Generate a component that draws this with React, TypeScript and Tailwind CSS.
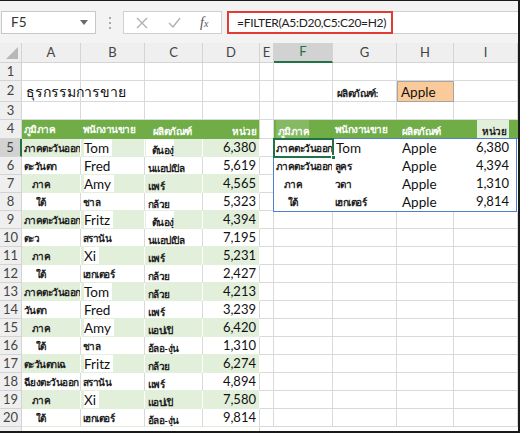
import React from 'react';

const font = { fontFamily: 'Lato, "Noto Sans", "DejaVu Sans", sans-serif' };

const colW = [
    'w-[22px]', 'w-[59px]', 'w-[64px]', 'w-[58px]', 'w-[57px]',
    'w-[14px]', 'w-[59px]', 'w-[64px]', 'w-[57px]', 'w-[64px]',
];
const letters = ['A', 'B', 'C', 'D', 'E', 'F', 'G', 'H', 'I'];

interface SaleRow {
    region: string;
    rep: string;
    product: string;
    units: string;
    indent?: 'sm' | 'lg';
}

const sales: SaleRow[] = [
    { region: 'ภาคตะวันออก', rep: 'Tom', product: 'ต้นองุ่', units: '6,380' },
    { region: 'ตะวันตก', rep: 'Fred', product: 'นแอปเปิล', units: '5,619' },
    { region: 'ภาค', rep: 'Amy', product: 'แพร์', units: '4,565', indent: 'sm' },
    { region: 'ใต้', rep: 'ชาล', product: 'กล้วย', units: '5,323', indent: 'lg' },
    { region: 'ภาคตะวันออก', rep: 'Fritz', product: 'ต้นองุ่', units: '4,394' },
    { region: 'ตะว', rep: 'สรานัน', product: 'นแอปเปิล', units: '7,195' },
    { region: 'ภาค', rep: 'Xi', product: 'แพร์', units: '5,231', indent: 'sm' },
    { region: 'ใต้', rep: 'เฮกเตอร์', product: 'กล้วย', units: '2,427', indent: 'lg' },
    { region: 'ภาคตะวันออก', rep: 'Tom', product: 'กล้วย', units: '4,213' },
    { region: 'วันตก', rep: 'Fred', product: 'แพร์', units: '3,239' },
    { region: 'ภาค', rep: 'Amy', product: 'แอปเปิ', units: '6,420', indent: 'sm' },
    { region: 'ใต้', rep: 'ชาล', product: 'อ้ลอ-งุ่น', units: '1,310', indent: 'lg' },
    { region: 'ตะวันตกเฉ', rep: 'Fritz', product: 'กล้วย', units: '6,274' },
    { region: 'ฉียงตะวันออก', rep: 'สรานัน', product: 'แพร์', units: '4,894' },
    { region: 'ภาค', rep: 'Xi', product: 'แอปเปิ', units: '7,580', indent: 'sm' },
    { region: 'ใต้', rep: 'เฮกเตอร์', product: 'อ้ลอ-งุ่น', units: '9,814', indent: 'lg' },
];

// FILTER result spilled into F5:I8
const filtered: SaleRow[] = [
    { region: 'ภาคตะวันออก', rep: 'Tom', product: 'Apple', units: '6,380' },
    { region: 'ภาคตะวันออก', rep: 'ลูคร', product: 'Apple', units: '4,394' },
    { region: 'ภาค', rep: 'วดา', product: 'Apple', units: '1,310', indent: 'sm' },
    { region: 'ใต้', rep: 'เฮกเตอร์', product: 'Apple', units: '9,814', indent: 'lg' },
];

const isLatin = (s: string) => /^[A-Za-z]/.test(s);

const Thai: React.FC<{ text: string; indent?: 'sm' | 'lg'; white?: boolean }> = ({ text, indent, white }) => (
    <span
        className={
            'text-[10px] font-bold leading-none tracking-[-0.55px] whitespace-nowrap ' +
            (indent === 'sm' ? 'pl-[10px] ' : indent === 'lg' ? 'pl-[14px] ' : 'pl-[2px] ') +
            (white ? 'text-white' : 'text-[#1f1f1f]')
        }
    >
        {text}
    </span>
);

const Name: React.FC<{ text: string; boxed?: boolean }> = ({ text, boxed }) =>
    isLatin(text) ? (
        <span className={'ml-[3px] pt-[3px] text-[13.5px] leading-none text-[#111] ' + (boxed ? 'bg-white pr-[3px]' : '')}>
            {text}
        </span>
    ) : (
        <Thai text={text} />
    );

const Cell: React.FC<{ col: number; className?: string; spill?: boolean; children?: React.ReactNode }> = ({
    col,
    className,
    spill,
    children,
}) => (
    <div
        className={
            'flex shrink-0 items-center border-r border-b ' +
            (spill ? 'relative z-10 overflow-visible ' : 'overflow-hidden ') +
            colW[col] +
            ' ' +
            (className ?? '')
        }
    >
        {children}
    </div>
);

const rowH = (r: number) =>
    r === 2 ? 'h-[21px]' : r === 4 ? 'h-[19px]' : 'h-[18px]';

function SheetRow({ r }: { r: number }) {
    const data = r >= 5 && r <= 20 ? sales[r - 5] : null;
    const spill = r >= 5 && r <= 8 ? filtered[r - 5] : null;
    const band = data && r % 2 === 1;
    const tableCell = band
        ? 'bg-[#e2efda] border-r-white border-b-[#e2efda]'
        : data
            ? 'bg-white border-r-[#d9d9d9] border-b-[#e2efda]'
            : 'bg-white border-[#d9d9d9]';
    const header = r === 4;
    const green = 'bg-[#70ad47] border-[#70ad47]';
    const spillCell = 'bg-white border-white';
    const dEdge = r >= 4 ? 'border-r-[#c6e0b4]' : '';

    return (
        <div className={'flex ' + rowH(r)}>
            <div
                className={
                    'flex w-[22px] shrink-0 items-center justify-center border-b border-[#d4d4d4] text-[13px] text-[#444] ' +
                    (r === 5 ? 'bg-[#d2d2d2] border-r-2 border-r-[#217346]' : 'bg-[#efefef] border-r')
                }
            >
                {r}
            </div>

            {/* A..D: sales table */}
            <Cell col={1} spill={r === 2} className={header ? green : tableCell}>
                {r === 2 && <span className="pl-[4px] pt-[1px] text-[14px] whitespace-nowrap text-[#111]">ธุรกรรมการขาย</span>}
                {header && <Thai text="ภูมิภาค" white />}
                {data && <Thai text={data.region} indent={data.indent} />}
            </Cell>
            <Cell col={2} className={header ? green : tableCell}>
                {header && <Thai text="พนักงานขาย" white />}
                {data && <Name text={data.rep} boxed={!!band} />}
            </Cell>
            <Cell col={3} className={header ? green : tableCell}>
                {header && <span className="pl-[6px]"><Thai text="ผลิตภัณฑ์" white /></span>}
                {data && (
                    <span className={'ml-[1px] ' + (data.product.startsWith('ต้น') ? 'pl-[4px] bg-white' : '')}>
                        <Thai text={data.product} />
                    </span>
                )}
            </Cell>
            <Cell col={4} className={'justify-end ' + (header ? green : tableCell) + ' ' + dEdge}>
                {header && <span className="pr-[3px]"><Thai text="หน่วย" white /></span>}
                {data && <span className="pr-[3px] text-[13px] text-[#111]">{data.units}</span>}
            </Cell>

            <Cell col={5} className="bg-white border-[#d9d9d9]" />

            {/* F..I: criteria and FILTER output */}
            <Cell col={6} className={header ? green : spill ? spillCell : 'bg-white border-[#d9d9d9]'}>
                {header && <span className="ml-[2px] bg-[#86ba62]"><Thai text="ภูมิภาค" white /></span>}
                {spill && <Thai text={spill.region} indent={spill.indent} />}
            </Cell>
            <Cell col={7} className={header ? green : spill ? spillCell : 'bg-white border-[#d9d9d9]'}>
                {r === 2 && <span className="pl-[2px]"><Thai text="ผลิตภัณฑ์:" /></span>}
                {header && <Thai text="พนักงานขาย" white />}
                {spill && <Name text={spill.rep} />}
            </Cell>
            <Cell
                col={8}
                className={
                    header
                        ? green
                        : spill
                            ? spillCell
                            : r === 2
                                ? 'bg-[#fbca9a] border border-[#a5a5a5]'
                                : 'bg-white border-[#d9d9d9]'
                }
            >
                {r === 2 && <span className="pl-[3px] pt-[2px] text-[13.5px] text-[#111]">Apple</span>}
                {header && <span className="pl-[3px]"><Thai text="ผลิตภัณฑ์" white /></span>}
                {spill && <span className="ml-[5px] pt-[3px] text-[13.5px] leading-none text-[#111]">{spill.product}</span>}
            </Cell>
            <Cell col={9} className={'justify-end ' + (header ? green : spill ? spillCell : 'bg-white border-[#d9d9d9]')}>
                {header && (
                    <span className="mr-[8px] bg-[#e2efda] px-[3px]">
                        <Thai text="หน่วย" />
                    </span>
                )}
                {spill && <span className="pr-[8px] text-[13px] text-[#111]">{spill.units}</span>}
            </Cell>
        </div>
    );
}

function FormulaBar() {
    return (
        <div className="flex h-[42px] items-start bg-[#f3f3f3] pt-[10px]">
            <div className="ml-[1px] flex h-[23px] w-[95px] items-center justify-between border border-[#c8c8c8] bg-white pl-[9px] pr-[7px]">
                <span className="text-[13.5px] text-[#333]">F5</span>
                <svg width="8" height="5" viewBox="0 0 8 5">
                    <path d="M0 0h8L4 5z" fill="#6b6b6b" />
                </svg>
            </div>
            <div className="flex h-[23px] w-[27px] flex-col items-center justify-center gap-[3px]">
                <span className="h-[2px] w-[2px] bg-[#a8a8a8]" />
                <span className="h-[2px] w-[2px] bg-[#a8a8a8]" />
                <span className="h-[2px] w-[2px] bg-[#a8a8a8]" />
            </div>
            <div className="flex h-[23px] w-[99px] items-center border border-[#d0d0d0] bg-white">
                <svg width="12" height="12" viewBox="0 0 12 12" className="ml-[12px]">
                    <path d="M1 1l10 10M11 1L1 11" stroke="#b0b0b0" strokeWidth="1.4" />
                </svg>
                <svg width="13" height="11" viewBox="0 0 13 11" className="ml-[20px]">
                    <path d="M1 6l4 4 7-9" stroke="#b0b0b0" strokeWidth="1.4" fill="none" />
                </svg>
                <span
                    className="ml-[19px] text-[14px] italic text-[#555]"
                    style={{ fontFamily: '"Liberation Serif", serif' }}
                >
                    f<span className="text-[10px]">x</span>
                </span>
            </div>
            <div className="ml-[5px] flex h-[23px] flex-1 items-center border-y border-[#d0d0d0] bg-white">
                <div className="flex h-[23px] w-[166px] items-center border-2 border-[#e23b34] pl-[8px]">
                    <span className="text-[12px] tracking-[-0.3px] whitespace-nowrap text-[#222]">=FILTER(A5:D20,C5:C20=H2)</span>
                </div>
            </div>
        </div>
    );
}

export default function App() {
    const rows = Array.from({ length: 20 }, (_, i) => i + 1);
    return (
        <div className="h-[433px] w-[520px] overflow-hidden bg-white" style={font}>
            <div className="h-[433px] w-[520px] border-t border-r-2 border-b-2 border-[#1a1a1a] bg-[#f3f3f3]">
                <FormulaBar />
                <div className="relative">
                    {/* column letters */}
                    <div className="flex h-[20px] bg-[#efefef]">
                        <div className="relative w-[22px] shrink-0 border-r border-b border-[#d4d4d4]">
                            <svg width="12" height="12" viewBox="0 0 12 12" className="absolute right-[3px] bottom-[3px]">
                                <path d="M12 0v12H0z" fill="#b8b8b8" />
                            </svg>
                        </div>
                        {letters.map((l, i) => (
                            <div
                                key={l}
                                className={
                                    'flex shrink-0 items-center justify-center border-r text-[13px] ' +
                                    colW[i + 1] +
                                    (l === 'F'
                                        ? ' bg-[#d2d2d2] border-b-2 border-b-[#217346] border-r-[#d4d4d4] text-[#217346]'
                                        : ' border-b border-[#d4d4d4] text-[#444]')
                                }
                            >
                                {l}
                            </div>
                        ))}
                    </div>
                    {rows.map((r) => (
                        <SheetRow key={r} r={r} />
                    ))}
                    <div className="flex h-[4px]">
                        <div className="w-[22px] shrink-0 border-r border-[#d4d4d4] bg-[#efefef]" />
                        <div className="w-[238px] shrink-0 border-r border-r-[#c6e0b4] bg-white" />
                        <div className="flex-1 bg-white" />
                    </div>

                    {/* spill range outline F5:I8 */}
                    <div className="pointer-events-none absolute top-[95px] left-[273px] h-[74px] w-[244px] border border-[#4f7fcf]" />
                    {/* active cell F5 */}
                    <div className="pointer-events-none absolute top-[95px] left-[273px] h-[20px] w-[61px] border-2 border-[#217346]">
                        <span className="absolute -right-[4px] -bottom-[4px] h-[5px] w-[5px] border border-white bg-[#217346]" />
                    </div>
                </div>
            </div>
        </div>
    );
}
